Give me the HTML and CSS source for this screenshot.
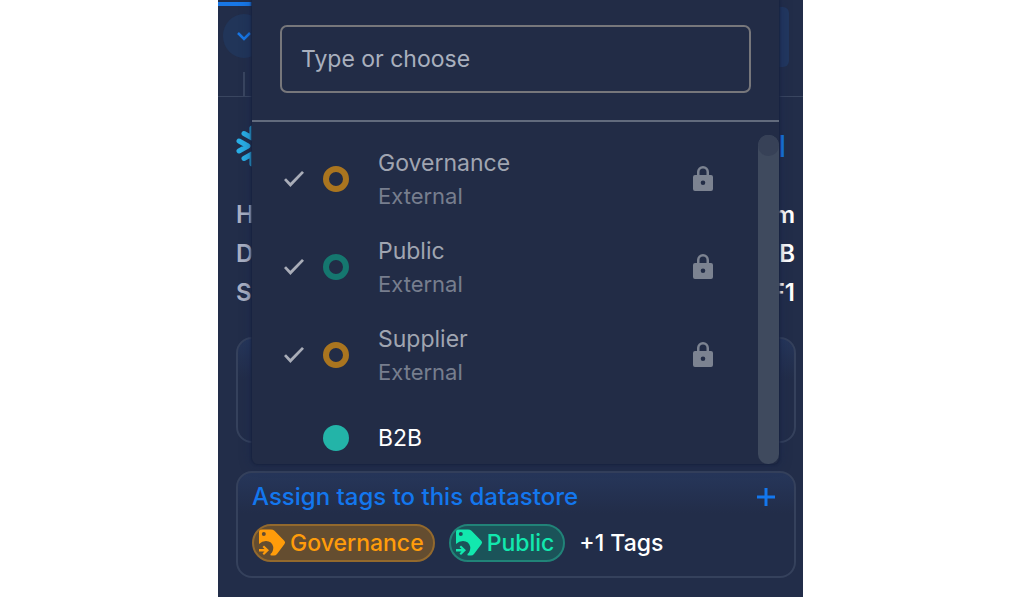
FILE: index.html
```
<!DOCTYPE html>
<html lang="en">
<head>
    <meta charset="UTF-8">
    <meta name="viewport" content="width=device-width, initial-scale=1.0">
    <title>Datastore Tags</title>
    <link rel="stylesheet" href="styles.css">
</head>
<body>

    <svg class="sprite" width="0" height="0" aria-hidden="true">
        <symbol id="lock" viewBox="0 0 20 26">
            <path fill-rule="evenodd" d="M10 0a6 6 0 0 1 6 6v3h2a2 2 0 0 1 2 2v12a2 2 0 0 1-2 2H2a2 2 0 0 1-2-2V11a2 2 0 0 1 2-2h2V6a6 6 0 0 1 6-6zm0 2.500a3.500 3.500 0 0 0-3.500 3.500v3h7V6A3.500 3.500 0 0 0 10 2.500zm0 12a2.300 2.300 0 1 0 0 4.600 2.300 2.300 0 0 0 0-4.600z"/>
        </symbol>
        <symbol id="tag" viewBox="0 0 28 28">
            <path fill-rule="evenodd" d="M3.500 0.500H13q2 0 3.500 1.200L26.500 12q1.200 1.500 0 3L19 25q-1.200 1.500-3 1.500h-2.500q-1.500 0-1-1.500 3-2.500 2.800-7Q14 12 8 12q-4 0-7 3V3Q1 0.500 3.500 0.500zM5.800 3a2 2 0 1 0 0 4 2 2 0 0 0 0-4z"/>
            <path d="M1 20h5.500l-2-2L6 16.500l5 4.800-5 4.700-1.500-1.500 2-2H1z"/>
        </symbol>
    </svg>

    <main class="panel">
        <div class="tabs">
            <button type="button" class="toggle" aria-label="Collapse">
                <svg width="14" height="9" viewBox="0 0 14 9"><path d="M1 1l6 6 6-6"/></svg>
            </button>
            <span class="tab-end"></span>
        </div>

        <div class="store">
            <svg class="snowflake" width="38" height="42" viewBox="0 0 38 42">
                <path d="M3 16l9 5-9 5M8 8.500l8 4.500V3M8 33.500l8-4.500v10M35 16l-9 5 9 5M30 8.500L22 13V3M30 33.500L22 29v10"/>
            </svg>
            <a href="#" class="store-link">l</a>
        </div>

        <dl class="details">
            <div><dt>H</dt><dd>m</dd></div>
            <div><dt>D</dt><dd>B</dd></div>
            <div><dt>S</dt><dd>F1</dd></div>
        </dl>

        <section class="card card-empty"></section>

        <section class="card">
            <div class="card-head">
                <h2>Assign tags to this datastore</h2>
                <button type="button" class="add" aria-label="Add tag">
                    <svg width="20" height="20" viewBox="0 0 20 20"><path d="M10 1v18M1 10h18"/></svg>
                </button>
            </div>
            <div class="chips">
                <span class="chip orange"><svg width="28" height="28"><use href="#tag"/></svg>Governance</span>
                <span class="chip green"><svg width="28" height="28"><use href="#tag"/></svg>Public</span>
                <span class="more">+1 Tags</span>
            </div>
        </section>

        <!-- Tag picker, opens over the panel -->
        <div class="dropdown">
            <div class="search">
                <input type="text" placeholder="Type or choose" aria-label="Type or choose">
            </div>
            <div class="list">
                <ul class="options">
                    <li>
                        <label class="option">
                            <input type="checkbox" checked disabled>
                            <span class="dot ring-orange"></span>
                            <span class="name">Governance<small>External</small></span>
                            <svg class="lock" width="20" height="26"><use href="#lock"/></svg>
                        </label>
                    </li>
                    <li>
                        <label class="option">
                            <input type="checkbox" checked disabled>
                            <span class="dot ring-green"></span>
                            <span class="name">Public<small>External</small></span>
                            <svg class="lock" width="20" height="26"><use href="#lock"/></svg>
                        </label>
                    </li>
                    <li>
                        <label class="option">
                            <input type="checkbox" checked disabled>
                            <span class="dot ring-orange"></span>
                            <span class="name">Supplier<small>External</small></span>
                            <svg class="lock" width="20" height="26"><use href="#lock"/></svg>
                        </label>
                    </li>
                    <li>
                        <label class="option active">
                            <input type="checkbox">
                            <span class="dot solid"></span>
                            <span class="name">B2B</span>
                        </label>
                    </li>
                </ul>
                <div class="scrollbar"><span></span></div>
            </div>
        </div>
    </main>

</body>
</html>
```
FILE: styles.css
```
* {
    box-sizing: border-box;
}

body {
    margin: 0;
    padding-right: 3px;
    background-color: white;
    font-family: Inter, "Open Sans", sans-serif;
    font-size: 23px;
    color: white;
}

button {
    padding: 0;
    border: none;
    background: none;
    cursor: pointer;
}

svg {
    display: block;
    flex: none;
}

.sprite {
    position: absolute;
}

.panel {
    position: relative;
    max-width: 585px;
    margin: 0 auto;
    padding-bottom: 19px;
    background-color: #222d49;
}

/* Top strip */
.tabs {
    display: flex;
    justify-content: space-between;
    align-items: flex-start;
    height: 97px;
    padding: 7px 14px 0 5px;
    border-bottom: 1px solid #3a4660;
    background: linear-gradient(#1877e6, #1877e6) 0 2px / 100px 4px no-repeat,
                linear-gradient(#3a4660, #3a4660) 25px 72px / 2px 24px no-repeat;
}

.toggle {
    display: flex;
    align-items: center;
    justify-content: center;
    width: 42px;
    height: 44px;
    margin-top: 7px;
    border-radius: 50%;
    background-color: #213559;
}

.toggle path {
    fill: none;
    stroke: #1877e6;
    stroke-width: 2.5;
}

.tab-end {
    width: 40px;
    height: 60px;
    border-radius: 6px;
    background-color: #22375f;
}

/* Datastore header */
.store {
    display: flex;
    justify-content: space-between;
    align-items: center;
    height: 98px;
    padding: 0 17px 0 18px;
}

.snowflake path {
    fill: none;
    stroke: #29aee6;
    stroke-width: 5;
    stroke-linecap: round;
    stroke-linejoin: round;
}

.store-link {
    color: #1877e6;
    font-size: 30px;
    font-weight: 500;
    text-decoration: none;
}

.details {
    margin: 0 8px 0 18px;
    font-size: 24px;
    font-weight: 600;
}

.details div {
    display: flex;
    justify-content: space-between;
    line-height: 39px;
}

.details dt {
    color: #a9b0c4;
}

.details dd {
    margin: 0;
}

/* Cards */
.card {
    margin: 28px 7px 0 18px;
    padding: 10px 18px 14px 14px;
    border: 2px solid #35415c;
    border-radius: 16px;
    background: linear-gradient(#26365a, #222d49 40px);
}

.card-empty {
    height: 106px;
    margin-top: 25px;
}

.card-head {
    display: flex;
    justify-content: space-between;
    align-items: center;
}

.card-head h2 {
    margin: 0;
    color: #1377ee;
    font-size: 24px;
    font-weight: 500;
    line-height: 28px;
}

.add path {
    stroke: #1377ee;
    stroke-width: 3;
}

.chips {
    display: flex;
    align-items: center;
    gap: 14px;
    margin-top: 13px;
    line-height: 34px;
}

.chip {
    display: flex;
    align-items: center;
    gap: 4px;
    padding: 0 9px 0 4px;
    border: 2px solid;
    border-radius: 19px;
    font-weight: 500;
}

.chip svg {
    fill: currentColor;
}

.orange {
    color: #ff9c0a;
    border-color: #93692d;
    background-color: #644d30;
}

.green {
    color: #12e8ae;
    border-color: #218378;
    background-color: #1b5359;
}

.more {
    font-weight: 500;
}

/* Dropdown */
.dropdown {
    position: absolute;
    top: 0;
    left: 34px;
    right: 24px;
    border-radius: 0 0 6px 6px;
    background-color: #222c46;
    box-shadow: 0 0 2px 1px #18233f, 0 0 12px rgba(18, 34, 76, 0.5);
    overflow: hidden;
}

.search {
    padding: 25px 28px 27px;
    border-bottom: 2px solid #626b7d;
}

.search input {
    display: block;
    width: 100%;
    height: 68px;
    padding: 0 19px;
    border: 2px solid #77777b;
    border-radius: 7px;
    background: none;
    color: white;
    font: inherit;
}

.search input::placeholder {
    color: #a9b0be;
    opacity: 1;
}

.list {
    display: flex;
    height: 342px;
    padding-top: 13px;
}

.options {
    flex: 1;
    margin: 0;
    padding: 0;
    list-style: none;
}

.option {
    display: flex;
    align-items: center;
    min-height: 88px;
    padding: 0 45px 0 32px;
    color: #a0a5b1;
}

.option input {
    appearance: none;
    width: 20px;
    height: 16px;
    margin: 0 19px 0 0;
}

.option input:checked {
    background-color: #a9adb8;
    clip-path: polygon(0 57%, 10% 45%, 32% 73%, 90% 0, 100% 11%, 32% 100%);
}

.dot {
    width: 26px;
    height: 26px;
    margin-right: 29px;
    border-radius: 50%;
}

.ring-orange {
    border: 6px solid #aa751f;
}

.ring-green {
    border: 6px solid #15776f;
}

.solid {
    background-color: #23b4a8;
}

.name {
    flex: 1;
    line-height: 34px;
}

.name small {
    display: block;
    color: #777e8e;
    font-size: 22px;
    line-height: 32px;
}

.lock {
    fill: #7c8391;
}

.active {
    min-height: 78px;
    color: white;
}

.scrollbar {
    width: 21px;
    border-radius: 10px;
    background-color: #3f4a5e;
}

.scrollbar span {
    display: block;
    height: 21px;
    border-radius: 50%;
    background-color: #374157;
}
```
